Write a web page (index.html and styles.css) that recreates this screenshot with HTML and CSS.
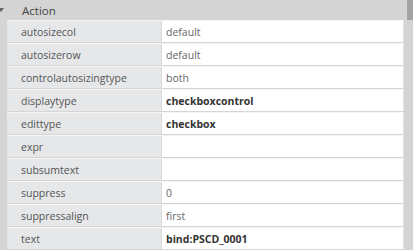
FILE: index.html
```html
<!DOCTYPE html>
<html>
<head>
<meta charset="utf-8">
<link rel="stylesheet" href="styles.css">
</head>
<body>
<div class="page">
  <div class="main">
    <div class="header"><span class="arrow"></span><span class="title">Action</span></div>
    <div class="rows">
      <div class="row"><div class="label">autosizecol</div><div class="value">default</div></div>
      <div class="row"><div class="label">autosizerow</div><div class="value">default</div></div>
      <div class="row"><div class="label">controlautosizingtype</div><div class="value">both</div></div>
      <div class="row"><div class="label">displaytype</div><div class="value bold">checkboxcontrol</div></div>
      <div class="row"><div class="label">edittype</div><div class="value bold">checkbox</div></div>
      <div class="row"><div class="label">expr</div><div class="value"></div></div>
      <div class="row"><div class="label">subsumtext</div><div class="value"></div></div>
      <div class="row"><div class="label">suppress</div><div class="value">0</div></div>
      <div class="row"><div class="label">suppressalign</div><div class="value">first</div></div>
      <div class="row"><div class="label">text</div><div class="value bold">bind:PSCD_0001</div></div>
    </div>
  </div>
  <div class="scrollbar"><div class="thumb"></div></div>
</div>
</body>
</html>
```
FILE: styles.css
```css
html, body {
  margin: 0;
  padding: 0;
  background: #d4d4d4;
  font-family: "Open Sans", "Noto Sans", sans-serif;
  font-size: 10.5px;
  color: #555;
  overflow: hidden;
}
.page {
  display: flex;
  width: 413px;
  height: 250px;
}
.main {
  flex: 1;
  display: flex;
  flex-direction: column;
}
.header {
  height: 20px;
  display: flex;
  align-items: center;
  position: relative;
}
.arrow {
  position: absolute;
  left: -2px;
  top: 8px;
  width: 0;
  height: 0;
  border-left: 3px solid transparent;
  border-right: 3px solid transparent;
  border-top: 4px solid #666;
}
.title {
  margin-left: 22px;
  color: #444;
  font-size: 11.5px;
}
.rows {
  padding-left: 7px;
  padding-right: 3px;
  display: flex;
  flex-direction: column;
}
.row {
  display: grid;
  grid-template-columns: 155px 1fr;
  height: 21px;
  border-top: 1px solid #f4f4f4;
  border-bottom: 1px solid #d6d6d6;
}
.label {
  background: #e6e7e9;
  padding-left: 14px;
  display: flex;
  align-items: center;
  border-right: 1px solid #d9d9d9;
}
.value {
  background: #fff;
  padding-left: 4px;
  display: flex;
  align-items: center;
  color: #666;
  border-right: 1px solid #e4e4e4;
}
.value.bold {
  font-weight: 700;
  color: #333;
}
.scrollbar {
  width: 6px;
  background: #d4d4d4;
}
.thumb {
  height: 20px;
  background: #a3a3a3;
}
```
